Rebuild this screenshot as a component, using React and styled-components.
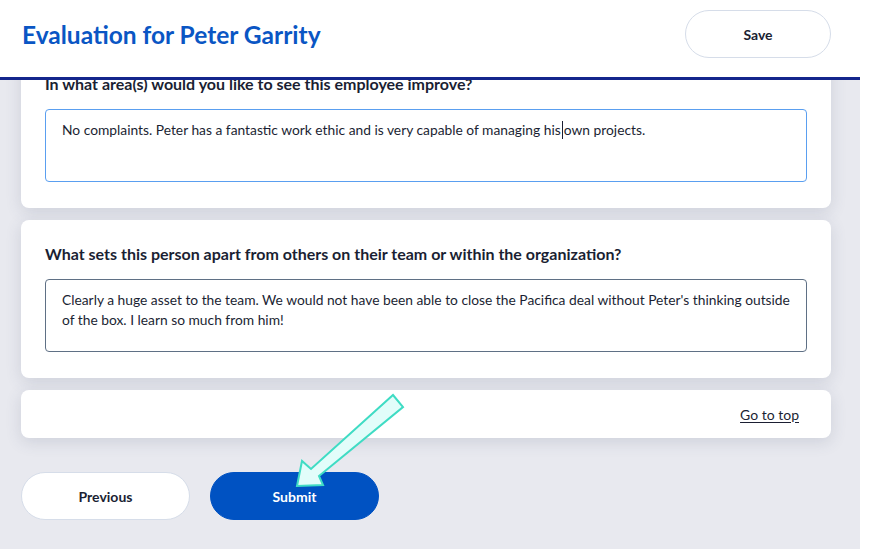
import React from "react"
import styled, { createGlobalStyle } from "styled-components"

const GlobalStyle = createGlobalStyle`
	html, body {
		margin: 0;
		padding: 0;
		background: #ffffff;
	}
	body {
		font-family: Lato, "Open Sans", "Liberation Sans", sans-serif;
		color: #1b1f33;
		overflow: hidden;
	}
	* {
		box-sizing: border-box;
	}
`

const Page = styled.div`
	position: relative;
	display: flex;
	width: 873px;
	height: 549px;
	overflow: hidden;
`

const Main = styled.div`
	flex: 1;
	display: flex;
	flex-direction: column;
	background: #e8e9ef;
	min-width: 0;
`

const ScrollTrack = styled.div`
	width: 13px;
	background: #ffffff;
`

const Header = styled.header`
	position: sticky;
	top: 0;
	z-index: 2;
	display: flex;
	align-items: center;
	justify-content: space-between;
	height: 80px;
	padding: 0 29px 9px 22px;
	background: #ffffff;
	border-bottom: 3px solid #14268c;
`

const Title = styled.h1`
	margin: 0;
	font-size: 24.5px;
	font-weight: 700;
	color: #0a56c4;
`

const Content = styled.main`
	position: relative;
	z-index: 1;
	display: flex;
	flex-direction: column;
	gap: 12px;
	margin-top: -30px;
	padding: 0 29px 0 21px;
`

const Card = styled.section`
	background: #ffffff;
	border-radius: 8px;
	padding: ${(p) => (p.$compact ? "0 32px" : "24px 24px 26px")};
	height: ${(p) => (p.$compact ? "48px" : "auto")};
	display: ${(p) => (p.$compact ? "flex" : "block")};
	align-items: center;
	justify-content: flex-end;
	box-shadow: 0 4px 16px rgba(70, 80, 110, 0.16);
`

const Question = styled.h2`
	margin: 0 0 15px;
	font-size: 16px;
	line-height: 20px;
	font-weight: 700;
	color: #1b1f33;
`

const Answer = styled.div`
	height: 73px;
	padding: 10px 12px 10px 16px;
	border: 1px solid ${(p) => (p.$focused ? "#5a9ff0" : "#5f7085")};
	border-radius: 4px;
	font-size: 13.8px;
	line-height: 20px;
	color: #1b1f33;
`

const Caret = styled.span`
	display: inline-block;
	width: 1px;
	height: 18px;
	margin: 0 1px -4px 1px;
	background: #1b1f33;
`

const TopLink = styled.a`
	font-size: 14px;
	color: #1b1f33;
	text-decoration: underline;
	text-underline-offset: 2px;
	cursor: pointer;
`

const Actions = styled.div`
	display: flex;
	gap: 20px;
	margin-top: 22px;
`

const PillButton = styled.button`
	width: ${(p) => p.$width || "169px"};
	height: 48px;
	border-radius: 24px;
	font-family: inherit;
	font-size: 14px;
	font-weight: 700;
	cursor: pointer;
	color: ${(p) => (p.$primary ? "#ffffff" : "#1b1f33")};
	background: ${(p) => (p.$primary ? "#0052c2" : "#ffffff")};
	border: 1px solid ${(p) => (p.$primary ? "#0052c2" : "#d6dde9")};
`

const Annotation = styled.svg`
	position: absolute;
	left: 0;
	top: 0;
	z-index: 3;
	pointer-events: none;
`

export default function App() {
	return (
		<>
			<GlobalStyle />
			<Page>
				<Main>
					<Header>
						<Title>Evaluation for Peter Garrity</Title>
						<PillButton $width="146px">Save</PillButton>
					</Header>
					<Content>
						<Card>
							<Question>
								In what area(s) would you like to see this employee improve?
							</Question>
							<Answer $focused>
								No complaints. Peter has a fantastic work ethic and is very
								capable of managing his
								<Caret />
								own projects.
							</Answer>
						</Card>
						<Card>
							<Question>
								What sets this person apart from others on their team or within
								the organization?
							</Question>
							<Answer>
								Clearly a huge asset to the team. We would not have been able to
								close the Pacifica deal without Peter's thinking outside of the
								box. I learn so much from him!
							</Answer>
						</Card>
						<Card $compact>
							<TopLink>Go to top</TopLink>
						</Card>
						<Actions>
							<PillButton>Previous</PillButton>
							<PillButton $primary>Submit</PillButton>
						</Actions>
					</Content>
				</Main>
				<ScrollTrack />
				<Annotation width="873" height="549" viewBox="0 0 873 549">
					<polygon
						points="393,395 403,407 319,476 323,485 297,486 302,461 311,469"
						fill="#e2fdfa"
						stroke="#3fdcc4"
						strokeWidth="2"
						strokeLinejoin="miter"
					/>
				</Annotation>
			</Page>
		</>
	)
}
